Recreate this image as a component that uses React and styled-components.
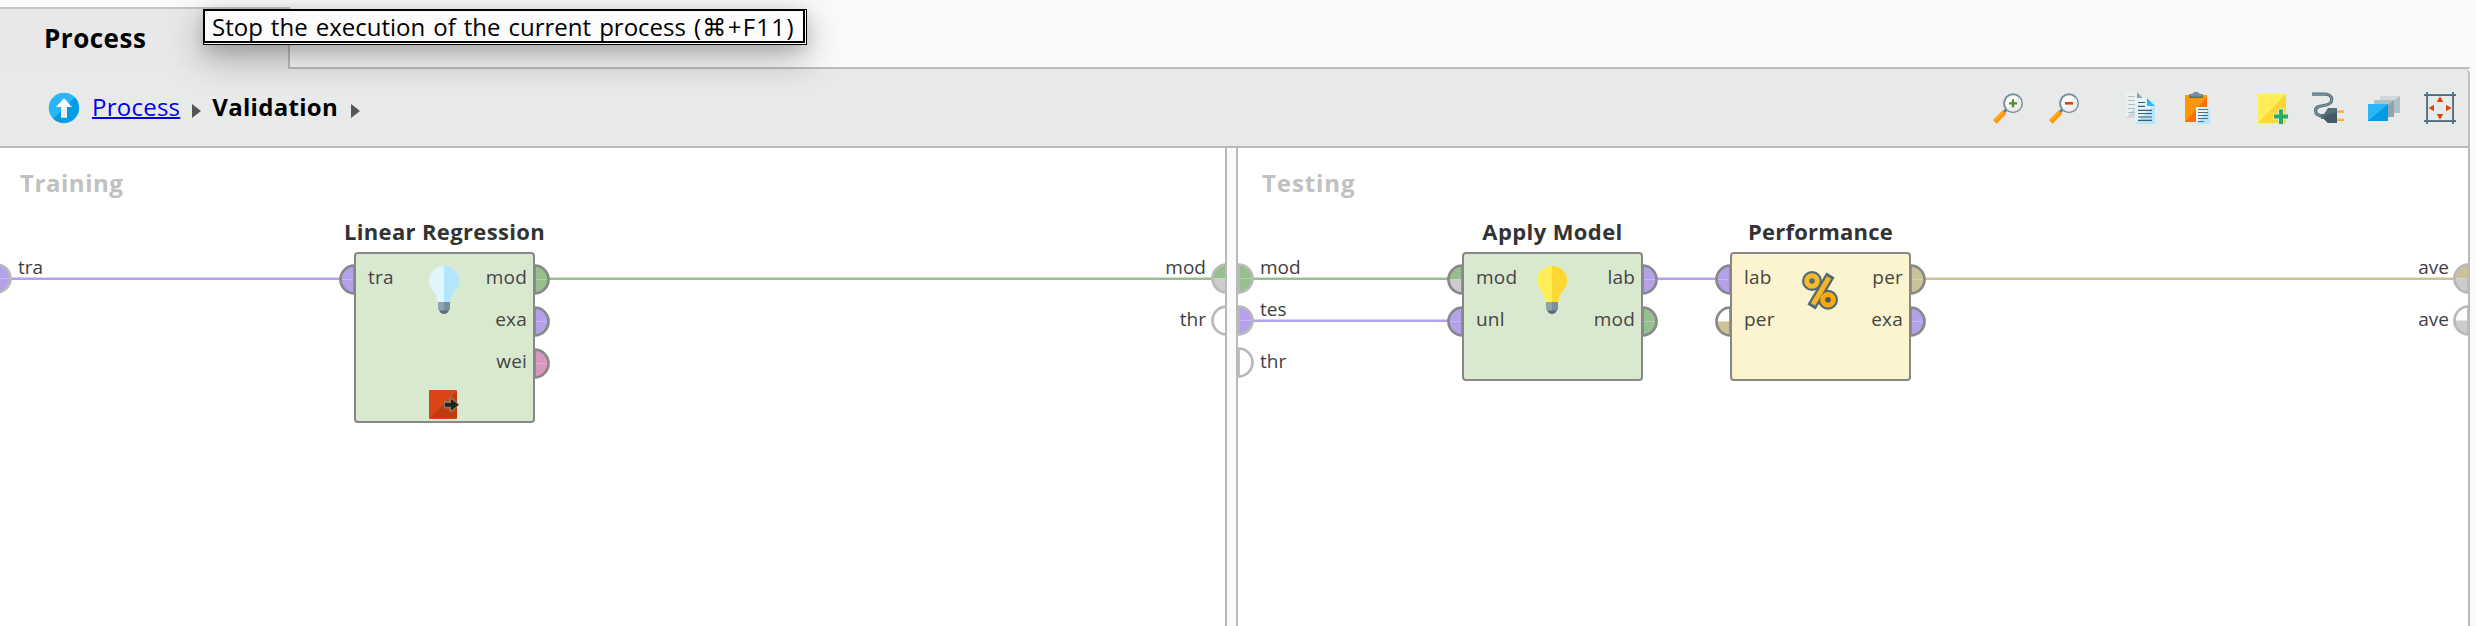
import React from "react";
import styled, { createGlobalStyle } from "styled-components";

const C = {
  line: "#b9b9b9",
  model: "#97bf8e",
  data: "#b3a2e9",
  weights: "#d798c0",
  perf: "#cbc295",
  grey: "#cccccc",
  node: "#888888",
};

const Global = createGlobalStyle`
  html, body { margin: 0; padding: 0; }
  body { background: #fafafa; font-family: "Open Sans", "DejaVu Sans", sans-serif; color: #000; overflow: hidden; }
`;

const Screen = styled.div`
  position: relative;
  display: flex;
  flex-direction: column;
  width: 2476px;
  height: 626px;
  background: #fafafa;
  overflow: hidden;
`;

const TabBar = styled.div`
  display: flex;
  height: 69px;
  padding-top: 7px;
  box-sizing: border-box;
`;

const Tab = styled.div`
  width: 290px;
  box-sizing: border-box;
  padding-left: 44px;
  background: #e8e8e8;
  border-top: 2px solid #c4c4c4;
  border-right: 2px solid #bdbdbd;
  font-weight: 700;
  font-size: 26px;
  line-height: 58px;
  letter-spacing: 0.5px;
`;

const TabRest = styled.div`
  width: 2180px;
  box-sizing: border-box;
  border-bottom: 2px solid #bdbdbd;
  border-bottom-right-radius: 2px;
`;

const Toolbar = styled.div`
  display: flex;
  align-items: center;
  justify-content: space-between;
  width: 2470px;
  height: 79px;
  box-sizing: border-box;
  padding: 0 12px 0 48px;
  background: #e8eaea;
  border-right: 2px solid #c0c0c0;
  border-bottom: 2px solid ${C.line};
  border-top-right-radius: 5px;
`;

const Crumbs = styled.div`
  display: flex;
  align-items: center;
  height: 32px;
  font-size: 24px;
  line-height: 30px;
`;

const CrumbLink = styled.a`
  margin: 0 12px;
  padding-bottom: 2px;
  color: #0000ee;
  letter-spacing: 0.25px;
  text-decoration: underline;
  text-decoration-thickness: 2px;
  text-underline-offset: 1px;
  text-decoration-skip-ink: none;
`;

const Crumb = styled.span`
  margin: 0 13px 0 11px;
  padding-bottom: 2px;
  font-weight: 700;
  letter-spacing: 0.3px;
`;

const Caret = styled.i`
  width: 0;
  height: 0;
  margin-top: 6px;
  border: 7.5px solid transparent;
  border-left: 9px solid #555;
  border-right: 0;
`;

const Tools = styled.div`
  display: flex;
  gap: 44px;
`;

const ToolGroup = styled.div`
  display: flex;
  gap: 24px;
`;

const Icon = styled.svg`
  display: block;
  flex: none;
  overflow: visible;
`;

const Panes = styled.div`
  display: flex;
  gap: 9px;
  width: 2470px;
  flex: 1;
`;

const Pane = styled.section`
  position: relative;
  width: ${(p) => p.$w}px;
  box-sizing: border-box;
  background: #fff;
  border: 0 solid ${C.line};
  border-right-width: 2px;
  border-left-width: ${(p) => (p.$left ? 2 : 0)}px;
  overflow: hidden;
`;

const PaneTitle = styled.h2`
  margin: 19px 0 0 ${(p) => p.$indent}px;
  font-size: 24px;
  line-height: 32px;
  letter-spacing: ${(p) => p.$ls}px;
  color: #c0c0c0;
`;

const Wires = styled.svg`
  position: absolute;
  inset: 0;
  width: 100%;
  height: 100%;
`;

const EdgePort = styled.div`
  position: absolute;
  top: ${(p) => p.$y - 148}px;
  left: ${(p) => p.$x}px;
`;

const EdgeLabel = styled.span`
  position: absolute;
  top: ${(p) => p.$y - 148}px;
  ${(p) => (p.$right != null ? `right: ${p.$right}px` : `left: ${p.$left}px`)};
  font-size: 19px;
  line-height: 24px;
  color: #404040;
`;

const Operator = styled.article`
  position: absolute;
  top: 104px;
  left: ${(p) => p.$x}px;
  width: 181px;
  height: ${(p) => p.$h}px;
  box-sizing: border-box;
  border: 2px solid ${C.node};
  border-radius: 4px;
  background: ${(p) => p.$fill};
  display: flex;
  justify-content: space-between;
`;

const OperatorName = styled.h3`
  position: absolute;
  top: -38px;
  left: 50%;
  transform: translateX(-50%);
  margin: 0;
  font-size: 22px;
  line-height: 30px;
  letter-spacing: ${(p) => p.$ls}px;
  color: #333;
  white-space: nowrap;
`;

const PortColumn = styled.div`
  display: flex;
  flex-direction: column;
  width: 62px;
  padding-top: 4px;
`;

const PortRow = styled.div`
  display: flex;
  align-items: center;
  flex-direction: ${(p) => (p.$out ? "row-reverse" : "row")};
  height: 42px;
  margin: 0 ${(p) => (p.$out ? "-17px 0 0" : "0 0 -17px")};
  gap: ${(p) => (p.$out ? 6 : 12)}px;
  font-size: 19px;
  letter-spacing: 0.2px;
  color: #444;
  span { padding-bottom: 4px; line-height: 24px; }
`;

const Middle = styled.div`
  display: flex;
  flex-direction: column;
  align-items: center;
  justify-content: space-between;
  width: 40px;
  margin-right: 1px;
  padding: ${(p) => p.$pad || 12}px 0 2px;
`;

const Tooltip = styled.div`
  position: absolute;
  top: 9px;
  left: 203px;
  width: 604px;
  height: 36px;
  box-sizing: border-box;
  padding: 0 1px 1px 0;
  border: 1px solid #000;
  background: #fff;
  box-shadow: 0 12px 36px rgba(0, 0, 0, 0.32), 0 4px 14px rgba(0, 0, 0, 0.12);
`;

const TooltipText = styled.div`
  height: 33px;
  box-sizing: border-box;
  border: solid #000;
  border-width: 1px 2px 2px 1px;
  background: #fcfcfc;
  padding-left: 7px;
  font-size: 24px;
  line-height: 32px;
  word-spacing: 1.8px;
  white-space: nowrap;
`;

const Shortcut = styled.span`
  letter-spacing: 1.3px;
`;

/* Semicircular connector; `side` is the direction its round side points to. */
function Port({ side, top, bottom = top, stroke = C.node, flat = true }) {
  const left = side === "left";
  const shape = `M0 1.5 A14 14 0 0 1 0 29.5${flat ? " Z" : ""}`;
  return (
    <Icon width="17" height="31" viewBox="0 0 17 31">
      <g transform={left ? "translate(15.5 0) scale(-1 1)" : "translate(1.5 0)"}>
        <path d="M0 1.5 A14 14 0 0 1 14 15.5 H0 Z" fill={top} />
        <path d="M0 29.5 A14 14 0 0 0 14 15.5 H0 Z" fill={bottom} />
        <path d={shape} fill="none" stroke={stroke} strokeWidth="2.7" />
      </g>
    </Icon>
  );
}

function Ports({ items, out }) {
  return (
    <PortColumn>
      {items.map((p, i) => (
        <PortRow key={i} $out={out}>
          <Port side={out ? "right" : "left"} top={p[1]} bottom={p[2]} />
          <span>{p[0]}</span>
        </PortRow>
      ))}
    </PortColumn>
  );
}

function Bulb({ light, dark }) {
  const outline =
    "M15 0 C6.5 0 0 6.4 0 14.5 C0 24 7 24 8.6 36 H21.4 C23 24 30 24 30 14.5 C30 6.4 23.5 0 15 0 Z";
  const half = "M15 0 C23.5 0 30 6.4 30 14.5 C30 24 23 24 21.4 36 H15 Z";
  return (
    <Icon width="30" height="48" viewBox="0 0 30 48">
      <path d={outline} fill={light} />
      <path d={half} fill={dark} />
      <path d="M9 36 H15 V47 H12 L9 43 Z" fill="#90a4ae" />
      <path d="M15 36 H21 V43 L18 47 H15 Z" fill="#78909c" />
      <path d="M10 44.5 H20 L18 47 Q15 49 12 47 Z" fill="#546e7a" />
    </Icon>
  );
}

function PercentIcon() {
  return (
    <Icon width="36" height="39" viewBox="0 0 36 39">
      <g fill="#4f6b77" stroke="#4f6b77">
        <ellipse cx="10" cy="10" rx="8" ry="8" strokeWidth="4" />
        <ellipse cx="26" cy="28.7" rx="8" ry="8" strokeWidth="4" />
        <path d="M28.5 4 L9.5 36" strokeWidth="9.5" fill="none" />
      </g>
      <path d="M27 6.5 L11 33.5" stroke="#fbb421" strokeWidth="5" />
      <circle cx="10" cy="10" r="5.3" fill="#4f6b77" stroke="#fbb829" strokeWidth="5" />
      <circle cx="26" cy="28.7" r="5.3" fill="#455a64" stroke="#ffaa00" strokeWidth="5" />
    </Icon>
  );
}

function StopIcon() {
  return (
    <Icon width="30" height="29" viewBox="0 0 30 29">
      <rect width="28" height="29" rx="1" fill="#da4516" />
      <path d="M28 1 V28 H1 Z" fill="#c23b10" />
      <path
        d="M15 11 H20 V7.5 H23.5 L30 14.7 L23.5 22 H20 V18.5 H15 Z"
        fill="#8c7a5c"
      />
      <path d="M16 13 H22 V9 L29.5 14.8 L22 20.5 V16.8 H16 Z" fill="#222" />
    </Icon>
  );
}

function UpIcon() {
  return (
    <Icon width="32" height="32" viewBox="0 0 32 32">
      <circle cx="16" cy="16" r="15.3" fill="#29b6f6" />
      <path d="M26.8 5.2 A15.3 15.3 0 0 1 5.2 26.8 Z" fill="#039be5" />
      <path d="M16 6.2 L24 15 H19 V25.5 H13 V15 H8 Z" fill="#fff" />
      <path d="M19 13 V25.5 H13 V19 Z" fill="#eeeeee" />
    </Icon>
  );
}

function ZoomIcon({ plus }) {
  return (
    <Icon width="32" height="32" viewBox="0 0 32 32">
      <path d="M15 17 L11 21" stroke="#607d8b" strokeWidth="3" />
      <circle cx="21" cy="11.3" r="9" fill="#fff" stroke="#78909c" strokeWidth="2" />
      <path d="M27 5.3 A8 8 0 0 1 15 17.3 Z" fill="#eeeeee" />
      <path d="M12.3 20.3 L2.8 30" stroke="#ff9800" strokeWidth="5" />
      <path d="M11.3 19.3 L1.8 29" stroke="#ffa726" strokeWidth="2" />
      {plus ? (
        <path d="M17 11.3 H25 M21 7.3 V15.3" stroke="#558b2f" strokeWidth="2.3" />
      ) : (
        <path d="M17 11.3 H25" stroke="#d84315" strokeWidth="2.6" />
      )}
    </Icon>
  );
}

function CopyIcon() {
  return (
    <Icon width="32" height="32" viewBox="0 0 32 32">
      <path d="M1.7 0 H13 L18 5 V26 H1.7 Z" fill="#eceff1" />
      <path d="M18 8 V26 H1.7 Z" fill="#cfd8dc" />
      <path d="M13 0 L18.5 6 H13 Z" fill="#90a4ae" />
      <path d="M4 4.5 H11 M4 8.5 H11 M4 12.5 H11 M4 16.5 H11 M4 20.5 H11" stroke="#b0bec5" strokeWidth="1.1" />
      <path d="M11 6 H23 L31 14 V32 H11 Z" fill="#e1f5fe" />
      <path d="M31 12 V32 H11 Z" fill="#b3e5fc" />
      <path d="M23 6 L31 14 H23 Z" fill="#29b6f6" />
      <path d="M14 10.5 H21 M14 14.4 H21 M14 18.4 H28 M14 21.5 H28 M14 25 H28 M14 28.4 H28" stroke="#455a64" strokeWidth="1.1" />
    </Icon>
  );
}

function PasteIcon() {
  return (
    <Icon width="32" height="32" viewBox="0 0 32 32">
      <rect x="5" y="3" width="22" height="27" fill="#ff9800" />
      <path d="M27 5 V30 H5 Z" fill="#ff6f00" />
      <path d="M9 6 V2 H12 Q16 -2.5 20 2 H23 V6 Z" fill="#78909c" />
      <path d="M9 4.5 H23 V6 H9 Z" fill="#546e7a" />
      <rect x="16" y="15" width="14" height="17" fill="#e1f5fe" />
      <path d="M30 15 V32 H16 Z" fill="#b3e5fc" />
      <path d="M18 17.5 H28 M18 20.5 H28 M18 23.5 H28 M18 26.5 H28 M18 29.5 H24" stroke="#546e7a" strokeWidth="1.1" />
    </Icon>
  );
}

function NoteIcon() {
  return (
    <Icon width="32" height="32" viewBox="0 0 32 32">
      <rect x="2" y="2" width="28" height="29" fill="#ffee58" />
      <path d="M30 2 V31 H2 Z" fill="#fdd835" />
      <path d="M17 24.6 H33 M25 16.6 V33" stroke="#dcebd5" strokeWidth="6" />
      <path d="M18 24.6 H32 M25 17.6 V32" stroke="#27ae60" strokeWidth="4" />
    </Icon>
  );
}

function PlugIcon() {
  const cord = "M0 2.2 H13 C21.5 2.2 22 11.6 14 13 C7 14 3.6 15 3.6 18.5 C3.6 22.5 7 24 12 24.3";
  return (
    <Icon width="32" height="32" viewBox="0 0 32 32">
      <path d={cord} fill="none" stroke="#546e7a" strokeWidth="3.2" />
      <path d={cord} fill="none" stroke="#90a4ae" strokeWidth="1" />
      <path d="M9 22 H12 L16 16 H25 V31 H16 L12 27 H9 Z" fill="#546e7a" />
      <path d="M12 24.5 L25 20 V31 H16 L12 27 Z" fill="#455a64" />
      <path d="M25 19.4 H32 M25 27.8 H32" stroke="#ffb74d" strokeWidth="2.4" />
      <path d="M25 20 H32 M25 28.4 H32" stroke="#f9a825" strokeWidth="1.1" />
    </Icon>
  );
}

function LayersIcon() {
  return (
    <Icon width="32" height="32" viewBox="0 0 32 32">
      <rect x="12" y="4" width="20" height="17" fill="#cfd8dc" />
      <path d="M32 4 V21 H12 Z" fill="#b0bec5" />
      <rect x="6" y="8" width="20" height="17" fill="#b0bec5" />
      <path d="M26 8 V25 H6 Z" fill="#90a4ae" />
      <rect x="0" y="12" width="20" height="17" fill="#29b6f6" />
      <path d="M20 12 V29 H0 Z" fill="#039be5" />
    </Icon>
  );
}

function FitIcon() {
  return (
    <Icon width="32" height="32" viewBox="0 0 32 32">
      <path d="M0 3 H32 M0 29 H32 M3 0 V32 M29 0 V32" stroke="#607d8b" strokeWidth="2" />
      <path d="M0 3.5 H32 M0 29.5 H32 M3.5 0 V32 M29.5 0 V32" stroke="#546e7a" strokeWidth="1" />
      <path
        d="M16 4.3 L19.3 10 H12.7 Z M16 27.7 L19.3 22 H12.7 Z M4.5 16 L10 12.8 V19.2 Z M27.7 16 L22 12.8 V19.2 Z"
        fill="#dd4412"
      />
    </Icon>
  );
}

export default function App() {
  return (
    <Screen>
      <Global />
      <TabBar>
        <Tab>Process</Tab>
        <TabRest />
      </TabBar>
      <Toolbar>
        <Crumbs>
          <UpIcon />
          <CrumbLink>Process</CrumbLink>
          <Caret />
          <Crumb>Validation</Crumb>
          <Caret />
        </Crumbs>
        <Tools>
          <ToolGroup>
            <ZoomIcon plus />
            <ZoomIcon />
          </ToolGroup>
          <ToolGroup>
            <CopyIcon />
            <PasteIcon />
          </ToolGroup>
          <ToolGroup>
            <NoteIcon />
            <PlugIcon />
            <LayersIcon />
            <FitIcon />
          </ToolGroup>
        </Tools>
      </Toolbar>

      <Panes>
        <Pane $w={1227}>
          <PaneTitle $indent={20} $ls={0.55}>Training</PaneTitle>
          <Wires strokeWidth="2.6">
            <path d="M11 130.7 H341" stroke={C.data} />
            <path d="M548 130.7 H1213" stroke={C.model} />
          </Wires>
          <EdgePort $x={-5} $y={263}>
            <Port side="right" top={C.data} stroke={C.line} />
          </EdgePort>
          <EdgeLabel $y={254.5} $left={18}>tra</EdgeLabel>
          <EdgePort $x={1211} $y={263}>
            <Port side="left" top={C.model} bottom={C.grey} stroke={C.line} flat={false} />
          </EdgePort>
          <EdgeLabel $y={254.5} $right={19}>mod</EdgeLabel>
          <EdgePort $x={1211} $y={305}>
            <Port side="left" top="#fff" stroke={C.line} flat={false} />
          </EdgePort>
          <EdgeLabel $y={306.5} $right={19}>thr</EdgeLabel>

          <Operator $x={354} $h={171} $fill="#d9e9cf">
            <OperatorName $ls={0.35}>Linear Regression</OperatorName>
            <Ports items={[["tra", C.data]]} />
            <Middle>
              <Bulb light="#e1f5fe" dark="#b3e5fc" />
              <StopIcon />
            </Middle>
            <Ports out items={[["mod", C.model], ["exa", C.data], ["wei", C.weights]]} />
          </Operator>
        </Pane>

        <Pane $w={1234} $left>
          <PaneTitle $indent={24} $ls={0.9}>Testing</PaneTitle>
          <Wires strokeWidth="2.6">
            <path d="M14 130.7 H211" stroke={C.model} />
            <path d="M14 172.7 H211" stroke={C.data} />
            <path d="M418 130.7 H479" stroke={C.data} />
            <path d="M686 130.7 H1217" stroke={C.perf} />
          </Wires>
          <EdgePort $x={-1} $y={263}>
            <Port side="right" top={C.model} stroke={C.line} />
          </EdgePort>
          <EdgeLabel $y={254.5} $left={22}>mod</EdgeLabel>
          <EdgePort $x={-1} $y={305}>
            <Port side="right" top={C.data} stroke={C.line} />
          </EdgePort>
          <EdgeLabel $y={296.5} $left={22}>tes</EdgeLabel>
          <EdgePort $x={-1} $y={347}>
            <Port side="right" top="#fff" stroke={C.line} />
          </EdgePort>
          <EdgeLabel $y={348.5} $left={22}>thr</EdgeLabel>
          <EdgePort $x={1215} $y={263}>
            <Port side="left" top={C.perf} bottom={C.grey} stroke={C.line} />
          </EdgePort>
          <EdgeLabel $y={254.5} $right={19}>ave</EdgeLabel>
          <EdgePort $x={1215} $y={305}>
            <Port side="left" top="#fff" bottom={C.grey} stroke={C.line} />
          </EdgePort>
          <EdgeLabel $y={306.5} $right={19}>ave</EdgeLabel>

          <Operator $x={224} $h={129} $fill="#d9e9cf">
            <OperatorName $ls={0.4}>Apply Model</OperatorName>
            <Ports items={[["mod", C.model, C.grey], ["unl", C.data]]} />
            <Middle>
              <Bulb light="#ffee58" dark="#fdd835" />
            </Middle>
            <Ports out items={[["lab", C.data], ["mod", C.model]]} />
          </Operator>

          <Operator $x={492} $h={129} $fill="#fcf4cf">
            <OperatorName $ls={0.2}>Performance</OperatorName>
            <Ports items={[["lab", C.data], ["per", "#fff", C.perf]]} />
            <Middle $pad={17}>
              <PercentIcon />
            </Middle>
            <Ports out items={[["per", C.perf], ["exa", C.data]]} />
          </Operator>
        </Pane>
      </Panes>

      <Tooltip role="tooltip">
        <TooltipText>
          Stop the execution of the current process <Shortcut>(⌘+F11)</Shortcut>
        </TooltipText>
      </Tooltip>
    </Screen>
  );
}
